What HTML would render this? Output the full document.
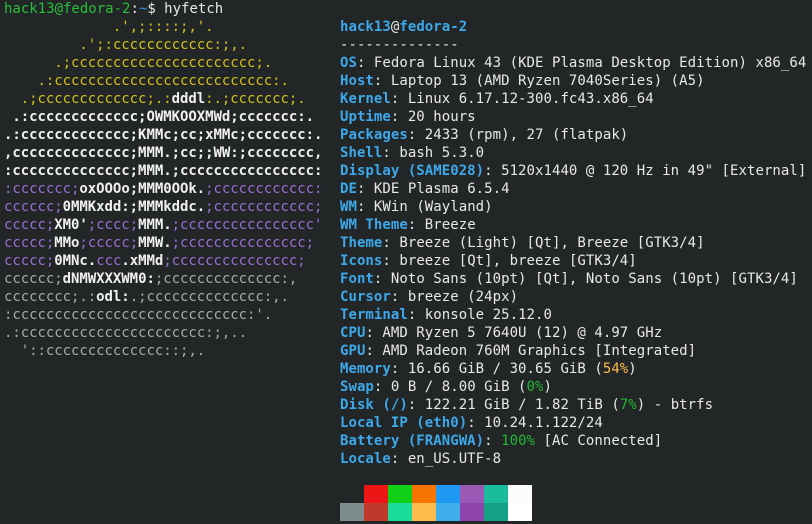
<!DOCTYPE html>
<html><head><meta charset="utf-8"><style>
html,body{margin:0;padding:0;background:#232627;width:812px;height:524px;overflow:hidden}
pre{margin:0;position:absolute;font-family:"DejaVu Sans Mono","Liberation Mono",monospace;font-size:14px;line-height:18px;color:#e8e8e8;white-space:pre}
.g{color:#27c13a}.bl{color:#2e8fe0}
.y{color:#d2c21c}.w{color:#f0f0f0;font-weight:bold}.p{color:#9a6fd6}.r{color:#a7a9ab}
.k{color:#3da8ea;font-weight:bold}
.o{color:#fdbc4b}.gr{color:#22b834}
.sw{position:absolute;width:24px;height:18px}
</style></head><body>
<pre style="left:4px;top:0px"><span class="g">hack13@fedora-2</span>:<span class="bl">~</span>$ hyfetch</pre>
<pre style="left:4px;top:18px;letter-spacing:-0.05px"><span class="y">             .',;::::;,'.
         .';:cccccccccccc:;,.
      .;cccccccccccccccccccccc;.
    .:cccccccccccccccccccccccccc:.
  .;ccccccccccccc;.:</span><span class="w">dddl</span><span class="y">:.;ccccccc;.</span>
<span class="w"> .:ccccccccccccc;OWMKOOXMWd;ccccccc:.
.:ccccccccccccc;KMMc;cc;xMMc;ccccccc:.
,cccccccccccccc;MMM.;cc;;WW:;cccccccc,
:cccccccccccccc;MMM.;cccccccccccccccc:</span>
<span class="p">:ccccccc;</span><span class="w">oxOOOo;MMM0OOk.</span><span class="p">;cccccccccccc:</span>
<span class="p">cccccc;</span><span class="w">0MMKxdd:;MMMkddc.</span><span class="p">;cccccccccccc;</span>
<span class="p">ccccc;</span><span class="w">XM0'</span><span class="p">;cccc;</span><span class="w">MMM.</span><span class="p">;cccccccccccccccc'</span>
<span class="p">ccccc;</span><span class="w">MMo</span><span class="p">;ccccc;</span><span class="w">MMW.</span><span class="p">;ccccccccccccccc;</span>
<span class="p">ccccc;</span><span class="w">0MNc.</span><span class="p">ccc</span><span class="w">.xMMd</span><span class="p">;ccccccccccccccc;</span>
<span class="r">cccccc;</span><span class="w">dNMWXXXWM0:</span><span class="r">;cccccccccccccc:,</span>
<span class="r">cccccccc;.:</span><span class="w">odl:</span><span class="r">.;cccccccccccccc:,.</span>
<span class="r">:cccccccccccccccccccccccccccc:'.
.:cccccccccccccccccccccc:;,..
  '::cccccccccccccc::;,.</span></pre>
<pre style="left:340px;top:18px;letter-spacing:0.05px"><span class="k">hack13</span>@<span class="k">fedora-2</span>
--------------
<span class="k">OS</span>: Fedora Linux 43 (KDE Plasma Desktop Edition) x86_64
<span class="k">Host</span>: Laptop 13 (AMD Ryzen 7040Series) (A5)
<span class="k">Kernel</span>: Linux 6.17.12-300.fc43.x86_64
<span class="k">Uptime</span>: 20 hours
<span class="k">Packages</span>: 2433 (rpm), 27 (flatpak)
<span class="k">Shell</span>: bash 5.3.0
<span class="k">Display (SAME028)</span>: 5120x1440 @ 120 Hz in 49" [External]
<span class="k">DE</span>: KDE Plasma 6.5.4
<span class="k">WM</span>: KWin (Wayland)
<span class="k">WM Theme</span>: Breeze
<span class="k">Theme</span>: Breeze (Light) [Qt], Breeze [GTK3/4]
<span class="k">Icons</span>: breeze [Qt], breeze [GTK3/4]
<span class="k">Font</span>: Noto Sans (10pt) [Qt], Noto Sans (10pt) [GTK3/4]
<span class="k">Cursor</span>: breeze (24px)
<span class="k">Terminal</span>: konsole 25.12.0
<span class="k">CPU</span>: AMD Ryzen 5 7640U (12) @ 4.97 GHz
<span class="k">GPU</span>: AMD Radeon 760M Graphics [Integrated]
<span class="k">Memory</span>: 16.66 GiB / 30.65 GiB (<span class="o">54%</span>)
<span class="k">Swap</span>: 0 B / 8.00 GiB (<span class="gr">0%</span>)
<span class="k">Disk (/)</span>: 122.21 GiB / 1.82 TiB (<span class="gr">7%</span>) - btrfs
<span class="k">Local IP (eth0)</span>: 10.24.1.122/24
<span class="k">Battery (FRANGWA)</span>: <span class="gr">100%</span> [AC Connected]
<span class="k">Locale</span>: en_US.UTF-8</pre>
<div class="sw" style="left:364px;top:485px;background:#ed1515"></div>
<div class="sw" style="left:388px;top:485px;background:#11d116"></div>
<div class="sw" style="left:412px;top:485px;background:#f67400"></div>
<div class="sw" style="left:436px;top:485px;background:#1d99f3"></div>
<div class="sw" style="left:460px;top:485px;background:#9b59b6"></div>
<div class="sw" style="left:484px;top:485px;background:#1abc9c"></div>
<div class="sw" style="left:508px;top:485px;background:#fcfcfc"></div>
<div class="sw" style="left:340px;top:503px;background:#7f8c8d"></div>
<div class="sw" style="left:364px;top:503px;background:#c0392b"></div>
<div class="sw" style="left:388px;top:503px;background:#1cdc9a"></div>
<div class="sw" style="left:412px;top:503px;background:#fdbc4b"></div>
<div class="sw" style="left:436px;top:503px;background:#3daee9"></div>
<div class="sw" style="left:460px;top:503px;background:#8e44ad"></div>
<div class="sw" style="left:484px;top:503px;background:#16a085"></div>
<div class="sw" style="left:508px;top:503px;background:#ffffff"></div>
</body></html>
